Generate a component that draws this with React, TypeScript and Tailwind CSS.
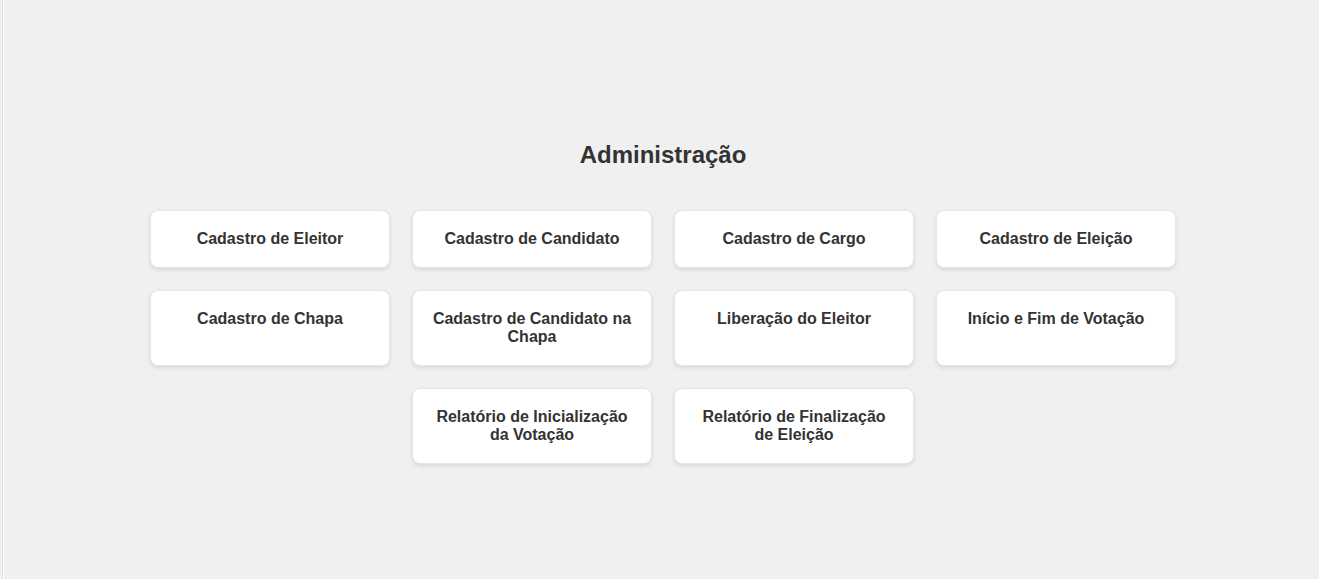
const items = [
  { label: "Cadastro de Eleitor" },
  { label: "Cadastro de Candidato" },
  { label: "Cadastro de Cargo" },
  { label: "Cadastro de Eleição" },
  { label: "Cadastro de Chapa" },
  { label: "Cadastro de Candidato na Chapa" },
  { label: "Liberação do Eleitor" },
  { label: "Início e Fim de Votação" },
  { label: "Relatório de Inicialização da Votação", start: true },
  { label: "Relatório de Finalização de Eleição" },
];

export default function App() {
  return (
    <div className="min-h-[579px] bg-[#f0f0f0] pl-[2px] font-['Liberation_Sans',Arial,sans-serif] text-[#333]">
      <div className="min-h-[579px] border-l border-[#dcdcdc] pl-[4px] shadow-[inset_1px_0_0_#fff]">
        <h2 className="pt-[141px] text-center text-[24px] font-bold leading-[28px]">
          Administração
        </h2>

        <div className="mt-[41px] grid grid-cols-[repeat(4,240px)] justify-center gap-[22px]">
          {items.map((item) => (
            <div
              key={item.label}
              className={`
                cursor-pointer rounded-lg border border-[#e6e6e6] bg-white px-[18px] py-[19px]
                text-center text-[16px] font-bold leading-[18px] text-[#333]
                shadow-[0_2px_4px_rgba(0,0,0,0.1)]
                ${item.start ? "col-start-2" : ""}
              `}
            >
              {item.label}
            </div>
          ))}
        </div>
      </div>
    </div>
  );
}
